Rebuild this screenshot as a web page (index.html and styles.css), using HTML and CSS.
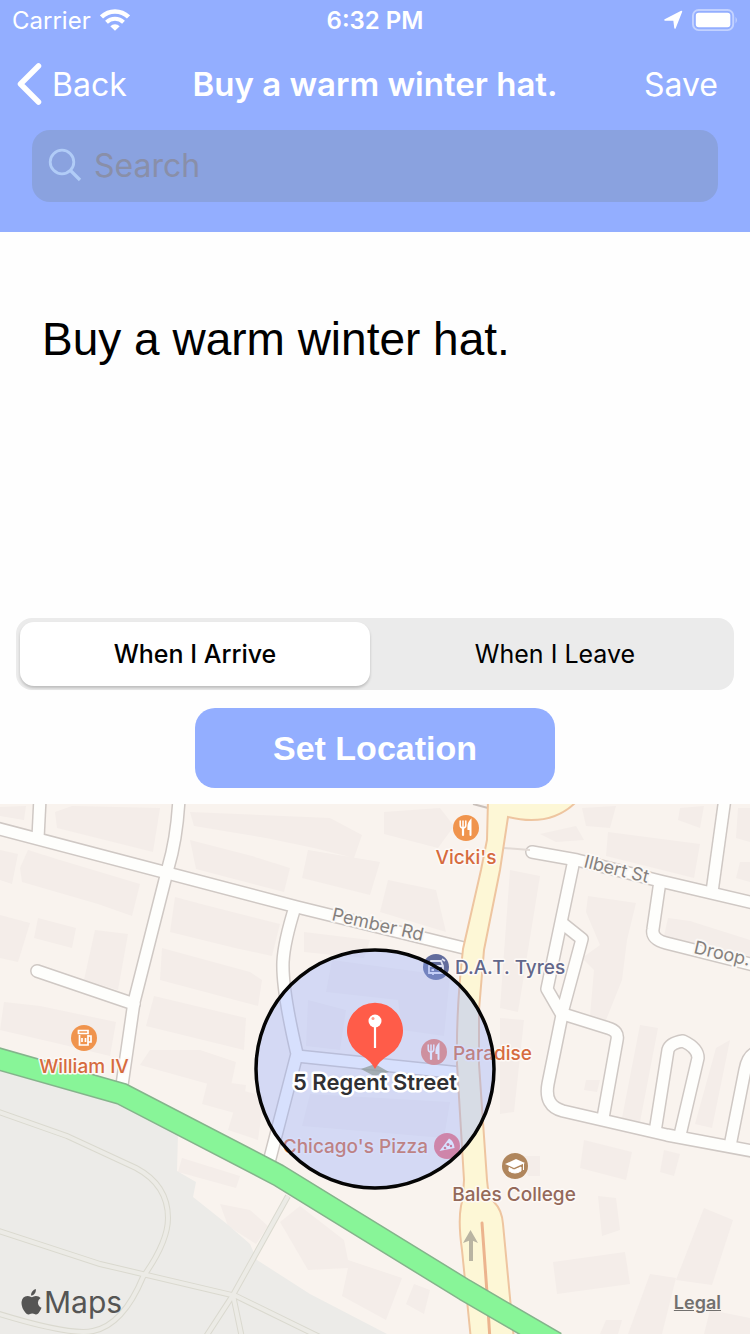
FILE: index.html
```html
<!DOCTYPE html>
<html lang="en">
<head>
<meta charset="utf-8">
<meta name="viewport" content="width=device-width, initial-scale=1">
<title>Buy a warm winter hat.</title>
<link rel="stylesheet" href="styles.css">
</head>
<body>
<header class="header">
  <div class="status">
    <div class="status-left">
      <span>Carrier</span>
      <svg class="wifi" viewBox="0 0 30 22" aria-hidden="true">
        <path d="M1.5 8A19.5 19.5 0 0 1 28.500 8" fill="none" stroke="#fff" stroke-width="4.500"/>
        <path d="M6.500 13.300A12.200 12.200 0 0 1 23.500 13.300" fill="none" stroke="#fff" stroke-width="4"/>
        <path d="M10.300 17.200A6.800 6.800 0 0 1 19.700 17.200L15 21.800Z" fill="#fff"/>
      </svg>
    </div>
    <time class="clock">6:32 PM</time>
    <div class="status-right">
      <svg class="arrow" viewBox="0 0 20 20" aria-hidden="true"><path d="M18.500 1.500L12 18L11 10H2Z" fill="#fff" stroke="#fff" stroke-width="1.500" stroke-linejoin="round"/></svg>
      <svg class="battery" viewBox="0 0 48 24" aria-hidden="true">
        <rect x="1" y="1" width="42" height="21" rx="6" fill="none" stroke="#fff" stroke-opacity=".45" stroke-width="2"/>
        <rect x="4" y="4" width="36" height="15" rx="3" fill="#fff"/>
        <path d="M45.500 8Q48 11.500 45.500 15Z" fill="#fff" fill-opacity=".5"/>
      </svg>
    </div>
  </div>
  <nav class="navbar">
    <button class="nav-button back" type="button">
      <svg class="chevron" viewBox="0 0 28 44" aria-hidden="true"><path d="M22.500 4L4.500 22L22.500 40" fill="none" stroke="#fff" stroke-width="5.500" stroke-linecap="round" stroke-linejoin="round"/></svg>
      Back
    </button>
    <h1 class="title">Buy a warm winter hat.</h1>
    <button class="nav-button save" type="button">Save</button>
  </nav>
  <label class="search">
    <svg class="search-icon" viewBox="0 0 34 34" aria-hidden="true"><circle cx="14" cy="14" r="11.800" fill="none" stroke="#b1ccf7" stroke-width="2.800"/><path d="M22.500 22.500L32 32" stroke="#b1ccf7" stroke-width="3.200"/></svg>
    <input class="search-input" type="search" placeholder="Search" aria-label="Search">
  </label>
</header>

<main class="content">
  <textarea class="note" aria-label="Reminder" spellcheck="false">Buy a warm winter hat.</textarea>

  <div class="segments" role="radiogroup" aria-label="Trigger">
    <label class="segment"><input class="segment-input" type="radio" name="trigger" checked><span class="segment-text">When I Arrive</span></label>
    <label class="segment"><input class="segment-input" type="radio" name="trigger"><span class="segment-text">When I Leave</span></label>
  </div>

  <button class="set-location" type="button">Set Location</button>

  <section class="map" aria-label="Map">
    <svg class="map-canvas" viewBox="0 804 750 530" preserveAspectRatio="xMidYMid slice">
      <defs>
        <g id="streets" fill="none" stroke-linejoin="round">
          <path d="M-8 827L297 907L468 949"/>
          <path d="M40 798L38 838"/>
          <path d="M179 798Q177 838 168 868L134 1002L121 1092"/>
          <path d="M37 971L134 1004" stroke-linecap="round"/>
          <path d="M295 907Q284 942 283 962Q282 990 297 1054L268 1166"/>
          <path d="M297 1056L470 1074"/>
          <path d="M532 852L577 860L660 881L758 904" stroke-linecap="round"/>
          <path d="M725 798L712 892"/>
          <path d="M660 881L653 929Q651 939 666 943L758 966"/>
          <path d="M574 860L547 989L562 1015L548 1084Q544 1106 563 1111L667 1135L758 1152"/>
          <path d="M562 923L582 939L562 1013"/>
          <path d="M560 1013L608 1028Q619 1031 617 1040L603 1118"/>
          <path d="M655 1132L668 1050Q670 1043 683 1041Q698 1048 698 1058L680 1135"/>
          <path d="M758 1052Q748 1054 745 1070L730 1146"/>
        </g>
        <g id="paths" fill="none">
          <path d="M-4 1111L67 1136L136 1168Q168 1185 168 1218Q168 1242 143 1277Q123 1325 93 1331Q70 1336 -4 1313"/>
          <path d="M-4 1230L100 1264L236 1296L330 1342"/>
          <path d="M288 1196L233 1295L205 1338M233 1295L242 1338"/>
        </g>
        <g id="cutlery" fill="none" stroke="#fff" stroke-linecap="round">
          <path d="M-3 0V7" stroke-width="2.200"/><path d="M-5.800 -7V-3Q-5.800 0 -3 0Q-.2 0 -.2 -3V-7M-3 -7V0" stroke-width="1.500"/>
          <path d="M4.500 7V-7Q2 -4 2.400 1H4.500" stroke-width="2" fill="#fff"/>
        </g>
      </defs>

      <rect y="704" x="-400" width="1550" height="730" fill="#f9f3ee"/>

      <g fill="#f4ede9">
        <path d="M0 807L26 806L24 820L0 816ZM55 812L72 806L160 808L153 852L57 828ZM190 840L252 856L290 868L284 892L196 869Z"/>
        <path d="M20 868L28 850L60 860L140 884L132 916L98 904L22 882ZM0 850L18 854L12 884L0 880ZM38 918L76 928L72 948L34 938Z"/>
        <path d="M95 930L128 934L118 990L84 980ZM0 915L30 923L18 962L0 958ZM4 1002L40 1006L116 1022L110 1056L60 1044L0 1030Z"/>
        <path d="M175 897L205 905L280 924L272 956L235 948L170 932ZM162 948L250 972L262 980L258 1006L160 980ZM154 996L246 1018L244 1050L146 1026Z"/>
        <path d="M150 1050L200 1050L236 1062L230 1090L140 1065ZM208 1080L246 1085L242 1115L202 1104Z"/>
        <path d="M190 812L330 818L362 835L354 858L314 848L266 838L194 826ZM308 850L380 862L370 895L302 878ZM384 812L440 808L454 826L438 848L384 834ZM388 880L436 890L446 932L380 912Z"/>
        <path d="M304 932L370 940L364 958L304 952ZM240 1090L264 1096L258 1140L228 1130Z"/>
        <path d="M332 960L450 976L444 1036L402 1030L398 1000L326 992ZM308 1000L346 1010L340 1050L306 1046ZM310 1094L450 1102L444 1138L302 1126Z"/>
        <path d="M510 870L540 876L518 1012L500 1008ZM588 896L636 903L627 940L622 980L606 1020L590 1016L594 970L582 958L600 945L586 912ZM608 832L700 844L694 878L606 856ZM540 834L576 826L584 840L556 842ZM582 808L616 806L610 828L586 826ZM680 808L704 806L700 828L678 820ZM738 808L750 808V842L736 838ZM740 862H750V882L736 878Z"/>
        <path d="M668 918L690 921L750 940V956L664 936ZM640 1025L658 1028L640 1122L622 1118ZM716 1048L730 1040L712 1128L695 1124ZM500 1018L524 1020L514 1112L500 1114ZM586 1080L600 1080L597 1092L584 1090Z"/>
        <path d="M584 1140L632 1152L626 1180L580 1168ZM664 1150L680 1154L674 1176L660 1172ZM598 1196L616 1198L620 1230L602 1236ZM704 1208L733 1220L712 1285L676 1280ZM553 1262L625 1252L630 1284L557 1294ZM650 1274L676 1278L662 1334H628ZM710 1310L750 1318V1334H704ZM606 1320L622 1320L618 1334H600Z"/>
        <path d="M182 1158L240 1176L236 1188L178 1172ZM220 1204L250 1210L268 1226L256 1244L228 1226ZM280 1222L300 1206L344 1240L348 1260L402 1278L386 1320L342 1296L348 1268L308 1270ZM414 1284L430 1290L424 1314L406 1304ZM522 1156H540V1176H528Z"/>
      </g>

      <path d="M-400 1060L0 1071L117 1103L178 1134L177 1171L196 1182L193 1197L227 1224L250 1244L257 1260L310 1294L387 1334V1434H-400Z" fill="#ecebe8"/>
      <use href="#paths" stroke="#dad9cf" stroke-width="6"/>
      <use href="#paths" stroke="#ecebe6" stroke-width="4"/>

      <use href="#streets" stroke="#cfc8c4" stroke-width="14"/>
      <use href="#streets" stroke="#fefefc" stroke-width="11"/>

      <path d="M504 848L530 850" stroke="#e2dad5" stroke-width="2"/>
      <path d="M473 804L488 808" stroke="#c9c0ba" stroke-width="2"/>
      <path d="M488 800L487 840L481 870L463 949Q456 1010 457 1064L464 1180Q463 1200 461 1206Q458 1222 462 1250L471 1340H514L503 1224Q502 1210 494 1202Q488 1196 487 1180L479 1064L479 1010L484 950L500 870L508 817Q552 828 578 800Z" fill="#fdf7d6" stroke="#eec5a0" stroke-width="2"/>
      <path d="M482 1223L487 1293L490 1340" fill="none" stroke="#ecb48e" stroke-width="3" stroke-linecap="round"/>

      <g fill="none" stroke-linejoin="round">
        <path d="M-400 980L-8 1057L122 1094L278 1175L465 1290L556 1343" stroke="#84b48b" stroke-width="23"/>
        <path d="M-400 980L-8 1057L122 1094L278 1175L465 1290L556 1343" stroke="#88f598" stroke-width="20"/>
      </g>

      <path d="M471 1261V1238" stroke="#b9b4a2" stroke-width="4"/><path d="M463 1243L470.500 1230L478 1243L471 1240Z" fill="#b9b4a2"/>

      <g class="street-label">
        <text transform="translate(331 920) rotate(13)">Pember Rd</text>
        <text transform="translate(583 867) rotate(14)">Ilbert St</text>
        <text transform="translate(693 953) rotate(13)">Droop.</text>
      </g>

      <g class="place-label">
        <text class="food" x="466" y="864" text-anchor="middle">Vicki's</text>
        <text class="food" x="84" y="1073" text-anchor="middle">William IV</text>
        <text class="food" x="453" y="1060">Paradise</text>
        <text class="food" x="428" y="1153" text-anchor="end">Chicago's Pizza</text>
        <text class="garage" x="455" y="974">D.A.T. Tyres</text>
        <text class="college" x="514" y="1201" text-anchor="middle">Bales College</text>
      </g>

      <g transform="translate(466 828)"><circle r="13" fill="#f0944d"/><use href="#cutlery"/></g>
      <g transform="translate(434 1052)"><circle r="13" fill="#f0806a"/><use href="#cutlery"/></g>
      <g transform="translate(84 1038)"><circle r="13" fill="#f0944d"/><path d="M-5.500 -7.500H4V-4.500H-5.500ZM-4.500 -3V7H4V-3M4 -2H7V4H4M-2 0V4M1.500 0V4" fill="none" stroke="#fff" stroke-width="1.700"/></g>
      <g transform="translate(436 967)"><circle r="13" fill="#626c9c"/><path d="M-7 -1L-5 -6H5L7 -1V6H-7ZM-7 -1H7M-4.500 3H-2M2 3H4.500M-3 6V8M6 -8L9 -6" fill="none" stroke="#dfe2f2" stroke-width="1.800"/></g>
      <g transform="translate(447 1146)"><circle r="13" fill="#f0707a"/><path d="M-7.500 5L2 -7.500Q7 -5 7.500 2Z" fill="#fff"/><circle cx="1" cy="-1.500" r="1.500" fill="#e4616b"/><circle cx="-2" cy="2" r="1.300" fill="#e4616b"/><circle cx="4" cy="0" r="1.200" fill="#e4616b"/></g>
      <g transform="translate(515 1166)"><circle r="13" fill="#b0865d"/><path d="M-10 -2L1 -7L10 -3L-1 2Z" fill="#fff"/><path d="M-6 1.500V5Q0 9 6 5V1L-1 4ZM8.500 -3V4" fill="#fff" stroke="#fff" stroke-width="1"/></g>

      <circle cx="375" cy="1069" r="119" fill="#94abff" fill-opacity=".36" stroke="#050505" stroke-width="3.500"/>

      <path d="M361 1069L375 1064L389 1072L374 1076Z" fill="#8d9896" opacity=".7"/>
      <path d="M375 1069Q371 1061 361 1055A28 28 0 1 1 389 1055Q379 1061 375 1069Z" fill="#ff5c49"/>
      <path d="M375 1024V1048" stroke="#fff" stroke-width="2.200"/><circle cx="375" cy="1021" r="6.500" fill="#fff"/><circle cx="373" cy="1018.500" r="1.500" fill="#ff9a8a"/>
      <text class="pin-label" x="375" y="1090" text-anchor="middle">5 Regent Street</text>
    </svg>
    <div class="map-footer">
      <div class="brand">
        <svg class="apple" viewBox="0 0 22 27" aria-hidden="true"><path d="M15.500 0Q16 3 14 5Q12.500 7 10.500 6.800Q10.300 4 12 2.200Q13.500 .5 15.500 0ZM20.500 9.200Q17.500 11 17.800 14.500Q18 18 21.500 19.500Q20.500 22.500 18.500 25Q17 27 14.800 26.300Q11.800 25 8.800 26.300Q6.500 27.200 4.500 24.600Q0 19 .6 13.300Q1.500 7.600 6.800 7.300Q8 7.300 11.400 8.600Q13 7.900 15.600 7.300Q18.800 7.300 20.500 9.200Z" fill="#555554"/></svg>
        <span>Maps</span>
      </div>
      <a class="legal" href="#legal">Legal</a>
    </div>
  </section>
</main>
</body>
</html>
```

FILE: styles.css
```css
* {
  box-sizing: border-box;
}

body {
  margin: 0;
  min-height: 100vh;
  display: flex;
  flex-direction: column;
  background: #fefefe;
  color: #000;
  font-family: Inter, "Liberation Sans", sans-serif;
}

button,
input,
textarea {
  font: inherit;
  color: inherit;
  border: 0;
  margin: 0;
  padding: 0;
  background: none;
  outline: 0;
}

/* Header */
.header {
  background: #93aeff;
  color: #fff;
  padding-bottom: 30px;
}

.status,
.navbar {
  display: grid;
  grid-template-columns: 1fr auto 1fr;
  align-items: center;
}

.status {
  height: 40px;
  padding: 0 12px;
  font-size: 24px;
}

.status-left,
.status-right {
  display: flex;
  align-items: center;
  gap: 9px;
}

.status-right {
  justify-content: flex-end;
}

.clock {
  font-weight: 600;
}

.wifi {
  width: 30px;
  height: 22px;
}

.arrow {
  width: 20px;
  height: 20px;
}

.battery {
  width: 46px;
  height: 23px;
}

.navbar {
  height: 88px;
  padding: 0 16px;
  font-size: 32px;
}

.nav-button {
  display: flex;
  align-items: center;
  gap: 8px;
}

.save {
  justify-self: end;
  padding-right: 16px;
}

.chevron {
  width: 28px;
  height: 44px;
}

.title {
  margin: 0;
  font-size: 33px;
  font-weight: 600;
}

.search {
  display: flex;
  align-items: center;
  gap: 12px;
  height: 72px;
  margin: 2px 32px 0;
  padding: 0 16px 2px;
  border-radius: 18px;
  background: #8aa2df;
}

.search-icon {
  width: 34px;
  height: 34px;
}

.search-input {
  flex: 1;
  min-width: 0;
  font-size: 32px;
}

.search-input::placeholder {
  color: #898fa9;
  opacity: 1;
}

/* Content */
.content {
  flex: 1;
  display: flex;
  flex-direction: column;
}

.note {
  height: 386px;
  padding: 80px 42px 0;
  font-family: "Liberation Sans", Arial, sans-serif;
  font-size: 46px;
  line-height: 54px;
  resize: none;
}

.segments {
  display: grid;
  grid-template-columns: 1fr 1fr;
  gap: 10px;
  height: 72px;
  margin: 0 16px;
  padding: 4px;
  border-radius: 16px;
  background: #ebebeb;
}

.segment {
  display: grid;
  font-size: 25px;
}

.segment-input {
  appearance: none;
  grid-area: 1 / 1;
  border-radius: 14px;
}

.segment-input:checked {
  background: #fff;
  box-shadow: 0 2px 3px rgb(0 0 0 / 20%);
}

.segment-text {
  grid-area: 1 / 1;
  place-self: center;
}

.segment-input:checked + .segment-text {
  font-weight: 500;
}

.set-location {
  align-self: center;
  width: 48%;
  height: 80px;
  margin: 18px 0 16px;
  border-radius: 20px;
  background: #93aeff;
  color: #fff;
  font-family: "Liberation Sans", Arial, sans-serif;
  font-size: 34px;
  font-weight: 700;
}

/* Map */
.map {
  position: relative;
  flex: 1;
  min-height: 530px;
  overflow: hidden;
}

.map-canvas {
  position: absolute;
  inset: 0;
  width: 100%;
  height: 100%;
}

.street-label,
.place-label,
.pin-label {
  paint-order: stroke;
  stroke-linejoin: round;
}

.street-label {
  font-size: 18px;
  fill: #85817e;
  stroke: #fbf8f5;
  stroke-width: 4px;
}

.place-label {
  font-size: 19px;
  font-weight: 500;
  stroke: #fdf9f6;
  stroke-width: 3px;
}

.food {
  fill: #d66b3e;
}

.garage {
  fill: #62678a;
}

.college {
  fill: #94695a;
}

.pin-label {
  font-size: 22px;
  font-weight: 600;
  fill: #303033;
  stroke: #fff;
  stroke-width: 5px;
}

.map-footer {
  position: absolute;
  left: 21px;
  right: 29px;
  bottom: 14px;
  display: flex;
  align-items: center;
  justify-content: space-between;
}

.brand {
  display: flex;
  align-items: center;
  gap: 2px;
  color: #555554;
  font-size: 30px;
}

.apple {
  width: 21px;
  height: 26px;
}

.legal {
  color: #72706e;
  font-size: 18px;
  font-weight: 600;
}
```
